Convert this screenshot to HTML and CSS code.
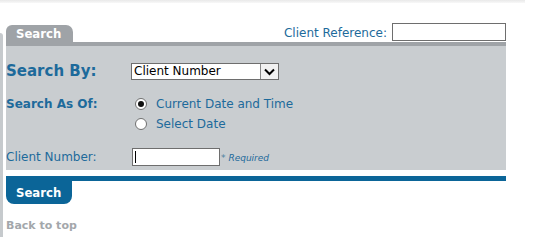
FILE: index.html
```html
<!DOCTYPE html>
<html>
<head>
<meta charset="utf-8">
<link rel="stylesheet" href="styles.css">
</head>
<body>
<div class="topshade"></div>
<div class="page">
  <div class="rail"></div>
  <div class="main">
    <div class="header">
      <div class="tab">Search</div>
      <div class="ref">
        <span class="ref-label">Client Reference:</span>
        <span class="textbox ref-box"></span>
      </div>
    </div>
    <div class="strip"></div>
    <div class="panel">
      <div class="row row-by">
        <div class="label label-big">Search By:</div>
        <div class="value">
          <div class="select">
            <span class="select-text">Client Number</span>
            <span class="select-btn">
              <svg width="11" height="8" viewBox="0 0 11 8"><path d="M1 1.5 L5.5 6 L10 1.5" fill="none" stroke="#000" stroke-width="2"/></svg>
            </span>
          </div>
        </div>
      </div>
      <div class="row row-asof">
        <div class="label label-bold">Search As Of:</div>
        <div class="value radios">
          <div class="radio-line"><span class="radio checked"></span><span class="opt">Current Date and Time</span></div>
          <div class="radio-line"><span class="radio"></span><span class="opt">Select Date</span></div>
        </div>
      </div>
      <div class="row row-num">
        <div class="label">Client Number:</div>
        <div class="value">
          <span class="textbox num-box"><span class="caret"></span></span>
          <span class="req"><span class="star">*</span> <em>Required</em></span>
        </div>
      </div>
    </div>
    <div class="blueline"></div>
    <div class="bluetab">Search</div>
    <div class="backtop">Back to top</div>
  </div>
</div>
</body>
</html>
```

FILE: styles.css
```css
html, body {
  margin: 0;
  padding: 0;
  background: #fff;
  font-family: "DejaVu Sans", sans-serif;
  color: #1d6a9b;
}
.topshade {
  width: 525px;
  height: 3px;
  background: linear-gradient(#e9e9e9, #f8f8f8);
}
.page {
  display: flex;
  height: 234px;
}
.rail {
  width: 3px;
  margin-top: 30px;
  background: #c6cacd;
  border-radius: 0 3px 0 0;
}
.main {
  margin-left: 3px;
  width: 500px;
  display: flex;
  flex-direction: column;
}
.header {
  margin-top: 20px;
  height: 19px;
  display: flex;
  justify-content: space-between;
  align-items: flex-end;
}
.tab {
  width: 67px;
  height: 17px;
  box-sizing: border-box;
  background: #9fa3a7;
  border-radius: 6px 7px 0 0;
  color: #fff;
  font-family: "DejaVu Sans Condensed", "DejaVu Sans", sans-serif;
  font-weight: bold;
  font-size: 13px;
  line-height: 17px;
  padding-left: 10px;
}
.ref {
  display: flex;
  align-items: center;
  height: 19px;
}
.ref-label {
  font-size: 12px;
  margin-right: 5px;
  margin-top: 1px;
}
.textbox {
  display: inline-block;
  box-sizing: border-box;
  background: #fff;
  border: 1px solid #6e6e6e;
}
.ref-box {
  width: 114px;
  height: 18px;
  margin-bottom: 1px;
}
.strip {
  height: 4px;
  background: #9fa3a7;
}
.panel {
  background: #c9cdd0;
  height: 124px;
  box-sizing: border-box;
  padding-top: 17px;
}
.row {
  display: flex;
}
.label {
  width: 125px;
  font-size: 12px;
}
.label-big {
  font-size: 15px;
  font-weight: bold;
  line-height: 17px;
}
.label-bold {
  font-weight: bold;
  line-height: 20px;
  font-size: 12px;
}
.row-by {
  height: 17px;
  align-items: center;
}
.select {
  width: 148px;
  height: 17px;
  box-sizing: border-box;
  border: 1px solid #6e6e6e;
  background: #fff;
  display: flex;
  color: #000;
  font-size: 12px;
}
.select-text {
  flex: 1;
  line-height: 15px;
  padding-left: 2px;
}
.select-btn {
  width: 17px;
  border-left: 1px solid #8a8a8a;
  background: #f1f1f1;
  display: flex;
  align-items: center;
  justify-content: center;
}
.row-asof {
  margin-top: 14px;
}
.radios {
  display: flex;
  flex-direction: column;
}
.radio-line {
  height: 20px;
  display: flex;
  align-items: center;
  padding-left: 4px;
}
.radio {
  width: 12px;
  height: 12px;
  box-sizing: border-box;
  border-radius: 50%;
  border: 1px solid #707070;
  background: #fff;
  margin-right: 9px;
  display: flex;
  align-items: center;
  justify-content: center;
}
.radio.checked::after {
  content: "";
  width: 6px;
  height: 6px;
  border-radius: 50%;
  background: #111;
}
.opt {
  font-size: 12px;
}
.row-num {
  margin-top: 14px;
  height: 18px;
  align-items: center;
}
.row-num .value {
  display: flex;
  align-items: center;
  padding-left: 1px;
}
.num-box {
  width: 88px;
  height: 18px;
  position: relative;
}
.caret {
  position: absolute;
  left: 2px;
  top: 2px;
  width: 1px;
  height: 12px;
  background: #000;
}
.req {
  font-size: 9px;
  margin-left: 1px;
  margin-top: 2px;
}
.star {
  color: #4f7f9f;
}
.blueline {
  margin-top: 6px;
  height: 5px;
  background: #0b6598;
}
.bluetab {
  width: 66px;
  height: 23px;
  box-sizing: border-box;
  background: #0b6598;
  border-radius: 0 0 8px 8px;
  color: #fff;
  font-family: "DejaVu Sans Condensed", "DejaVu Sans", sans-serif;
  font-weight: bold;
  font-size: 13px;
  line-height: 24px;
  padding-left: 10px;
}
.backtop {
  margin-top: 15px;
  font-size: 11px;
  font-weight: bold;
  color: #a3a7ab;
}
```
